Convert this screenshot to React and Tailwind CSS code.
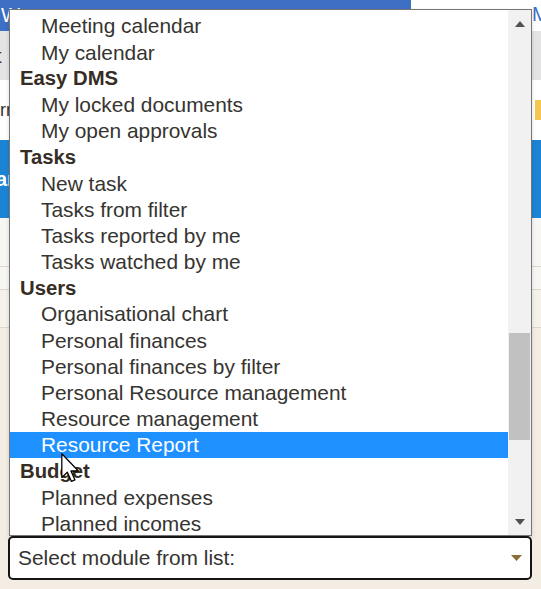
const groups = [
  { items: ["Meeting calendar", "My calendar"] },
  { label: "Easy DMS", items: ["My locked documents", "My open approvals"] },
  {
    label: "Tasks",
    items: ["New task", "Tasks from filter", "Tasks reported by me", "Tasks watched by me"],
  },
  {
    label: "Users",
    items: [
      "Organisational chart",
      "Personal finances",
      "Personal finances by filter",
      "Personal Resource management",
      "Resource management",
      "Resource Report",
    ],
  },
  { label: "Budget", items: ["Planned expenses", "Planned incomes"] },
];

const selected = "Resource Report";

function Row({ children, bold, active }) {
  if (bold) {
    return (
      <div className="h-[26.2px] flex items-center pl-[10px] text-[20.3px] font-bold text-[#362d24] whitespace-nowrap">
        {children}
      </div>
    );
  }
  return (
    <div
      className={
        active
          ? "h-[26.2px] flex items-center pl-[31px] text-[20.9px] text-white bg-[#1e90ff] whitespace-nowrap"
          : "h-[26.2px] flex items-center pl-[31px] text-[20.9px] text-[#363430] whitespace-nowrap"
      }
    >
      {children}
    </div>
  );
}

function Arrow({ up }) {
  return (
    <svg width="10" height="6" viewBox="0 0 10 6">
      <path d={up ? "M0 6 L5 0 L10 6 Z" : "M0 0 L10 0 L5 6 Z"} fill="#505050" />
    </svg>
  );
}

export default function App() {
  return (
    <div
      className="relative w-[541px] h-[589px] overflow-hidden bg-[#f3ede3]"
      style={{ fontFamily: '"Liberation Sans", Arial, sans-serif' }}
    >
      {/* Page behind the dropdown */}
      <div className="flex flex-col">
        <div className="h-[31px] flex">
          <div className="w-[411px] bg-[#3d6fc4] text-white text-[20px] leading-[31px] pl-[1px] overflow-hidden">
            W
          </div>
          <div className="flex-1 bg-white text-[#3d6fc4] text-[20px] leading-[28px] flex justify-end overflow-hidden">
            <span className="w-[9px] overflow-hidden">M</span>
          </div>
        </div>
        <div className="h-[49px] bg-[#e4e4e4] text-[#333] text-[20px] flex items-center">
          <span className="-ml-[4px]">t</span>
        </div>
        <div className="h-[60px] bg-white flex items-center justify-between text-[#333] text-[18px]">
          <span className="-ml-[10px]">err</span>
          <span className="w-[6px] h-[20px] bg-[#f2c94c]"></span>
        </div>
        <div className="h-[78px] bg-[#1c84d4] flex items-center text-white text-[20px] font-bold">
          <span className="-ml-[4px]">ar</span>
        </div>
        <div className="h-[49px] bg-[#f7f6f3] border-b border-[#ddd6cb]"></div>
        <div className="h-[23px] bg-[#f7f6f3] border-b border-[#ddd6cb]"></div>
        <div className="h-[38px] bg-[#f5f2ec] border-b border-[#ddd6cb]"></div>
      </div>

      {/* Open list */}
      <div className="absolute left-[9px] top-[9px] w-[523px] h-[527px] border border-[#767676] bg-white flex shadow-[0_2px_4px_rgba(0,0,0,0.15)]">
        <div className="flex-1 overflow-hidden pt-[3px]">
          {groups.map((g, i) => (
            <div key={i}>
              {g.label && <Row bold>{g.label}</Row>}
              {g.items.map((item) => (
                <Row key={item} active={item === selected}>
                  {item}
                </Row>
              ))}
            </div>
          ))}
        </div>
        <div className="w-[23px] bg-[#f1f1f1] flex flex-col">
          <div className="h-[27px] flex items-center justify-center">
            <Arrow up />
          </div>
          <div className="h-[296px]"></div>
          <div className="h-[107px] mx-[1px] bg-[#c1c1c1]"></div>
          <div className="flex-1"></div>
          <div className="h-[27px] flex items-center justify-center">
            <Arrow />
          </div>
        </div>
      </div>

      {/* Select box */}
      <div className="absolute left-[8px] top-[536px] w-[524px] h-[44px] border-2 border-[#141414] rounded-[5px] bg-white flex items-center justify-between pl-[8px] pr-[8px]">
        <span className="text-[20.9px] text-[#363430]">Select module from list:</span>
        <svg width="11" height="6" viewBox="0 0 11 6">
          <path d="M0 0 L11 0 L5.5 6 Z" fill="#8a6d3b" />
        </svg>
      </div>

      {/* Mouse pointer */}
      <svg
        className="absolute left-[61px] top-[453px]"
        width="19"
        height="30"
        viewBox="0 0 12 19"
      >
        <path
          d="M0.5 0.5 L0.5 15.5 L4 12.2 L6.6 18 L8.8 17 L6.3 11.4 L11 11.4 Z"
          fill="white"
          stroke="black"
          strokeWidth="0.8"
          strokeLinejoin="round"
        />
      </svg>
    </div>
  );
}
